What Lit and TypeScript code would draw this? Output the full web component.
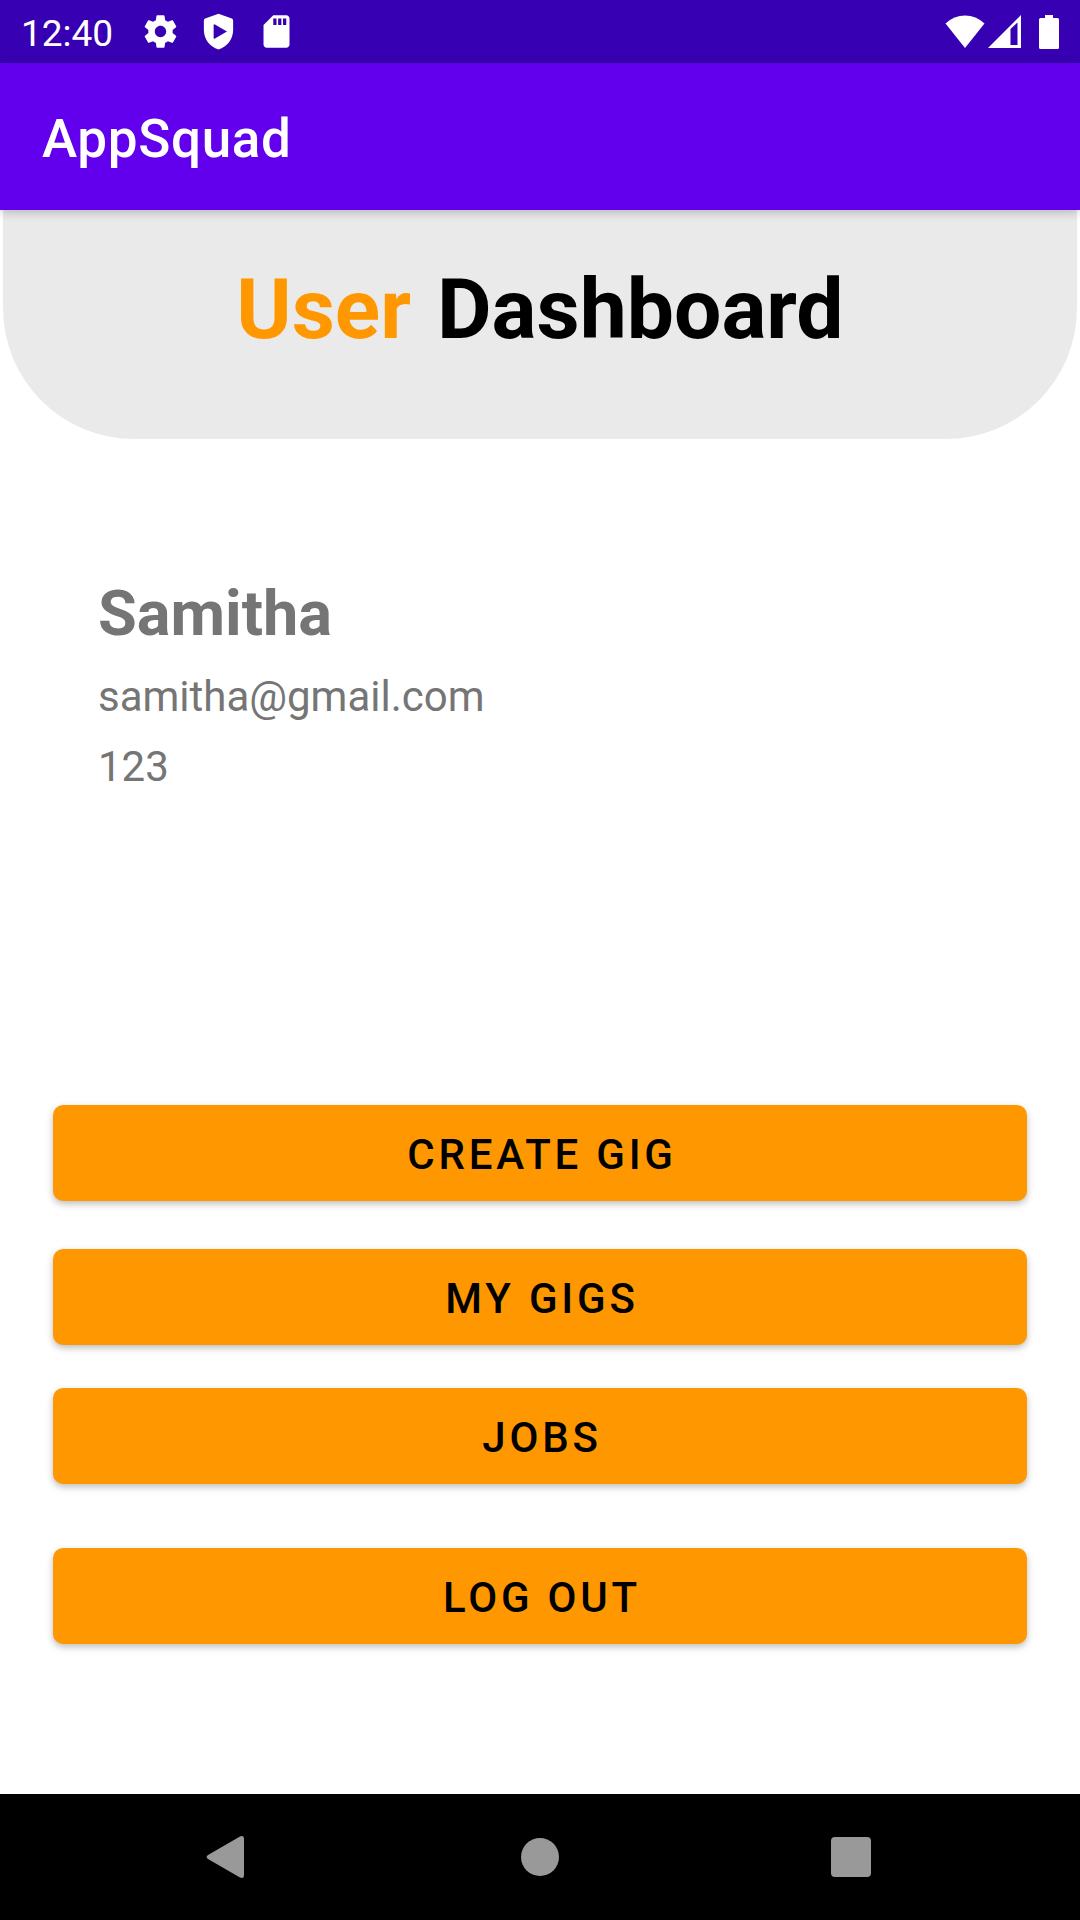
import { LitElement, html, css, svg } from "lit";
import { customElement, property } from "lit/decorators.js";

const fontStack = css`Roboto, "Noto Sans", sans-serif`;

@customElement("status-bar")
export class StatusBar extends LitElement {
  @property() time = "";

  static styles = css`
    :host {
      display: flex;
      align-items: center;
      justify-content: space-between;
      height: 63px;
      padding: 0 21px;
      background: #3700b3;
      color: #fff;
      font-family: ${fontStack};
      font-size: 37px;
      line-height: 44px;
    }
    .group {
      display: flex;
      align-items: center;
    }
    .time {
      padding-top: 4px;
    }
    .notices {
      display: flex;
      gap: 19px;
      margin-left: 28px;
    }
    .system {
      gap: 3px;
    }
    svg {
      display: block;
      fill: currentColor;
    }
    .battery {
      margin-left: 15px;
    }
  `;

  private notice(path: unknown) {
    return html`<svg width="39" height="39" viewBox="0 0 24 24" aria-hidden="true">${path}</svg>`;
  }

  render() {
    return html`
      <div class="group">
        <span class="time">${this.time}</span>
        <div class="notices">
          ${this.notice(svg`<path d="M19.43 12.98c.04-.32.07-.64.07-.98s-.03-.66-.07-.98l2.11-1.65c.19-.15.24-.42.12-.64l-2-3.46c-.12-.22-.39-.3-.61-.22l-2.49 1c-.52-.4-1.08-.73-1.69-.98l-.38-2.65C14.46 2.18 14.25 2 14 2h-4c-.25 0-.46.18-.49.42l-.38 2.65c-.61.25-1.17.59-1.69.98l-2.49-1c-.23-.09-.49 0-.61.22l-2 3.46c-.13.22-.07.49.12.64l2.11 1.65c-.04.32-.07.65-.07.98s.03.66.07.98l-2.11 1.65c-.19.15-.24.42-.12.64l2 3.46c.12.22.39.3.61.22l2.49-1c.52.4 1.08.73 1.69.98l.38 2.65c.03.24.24.42.49.42h4c.25 0 .46-.18.49-.42l.38-2.65c.61-.25 1.17-.59 1.69-.98l2.49 1c.23.09.49 0 .61-.22l2-3.46c.12-.22.07-.49-.12-.64l-2.11-1.65zM12 15.5c-1.93 0-3.5-1.57-3.5-3.5s1.57-3.5 3.5-3.5 3.5 1.57 3.5 3.5-1.57 3.5-3.5 3.5z"/>`)}
          ${this.notice(svg`<path fill-rule="evenodd" d="M12 1 3.800 4Q3 4.300 3 5.200V11c0 5.550 3.600 10.400 9 12 5.400-1.600 9-6.450 9-12V5.200Q21 4.300 20.200 4ZM9 8.200Q9 7.300 9.800 7.700L17.200 12 9.800 16.300Q9 16.700 9 15.800Z"/>`)}
          ${this.notice(svg`<path d="M18 2h-8L4.020 8 4 20c0 1.100.9 2 2 2h12c1.100 0 2-.9 2-2V4c0-1.100-.9-2-2-2zm-6 6h-2V4h2v4zm3 0h-2V4h2v4zm3 0h-2V4h2v4z"/>`)}
        </div>
      </div>
      <div class="group system">
        <svg width="40" height="34" viewBox="0 0 40 34" aria-hidden="true">
          <path d="M20 33 .5 8.500Q9 .5 20 .5T39.500 8.500Z" />
        </svg>
        <svg width="33" height="34" viewBox="0 0 33 34" aria-hidden="true">
          <path fill-rule="evenodd" d="M0 33 33 0V33ZM22.500 14V30H29.500V7.500Z" />
        </svg>
        <svg class="battery" width="20" height="34" viewBox="0 0 20 34" aria-hidden="true">
          <path d="M6 0H14V3H18.500Q20 3 20 4.500V32.500Q20 34 18.500 34H1.500Q0 34 0 32.500V4.500Q0 3 1.500 3H6Z" />
        </svg>
      </div>
    `;
  }
}

@customElement("navigation-bar")
export class NavigationBar extends LitElement {
  static styles = css`
    :host {
      display: grid;
      grid-template-columns: repeat(3, 1fr);
      height: 126px;
      padding: 0 73px;
      background: #000;
    }
    button {
      display: flex;
      align-items: center;
      justify-content: center;
      padding: 0;
      border: 0;
      background: none;
      color: #999;
      cursor: pointer;
    }
    svg {
      display: block;
      fill: currentColor;
    }
  `;

  render() {
    return html`
      <button type="button" aria-label="Back">
        <svg width="48" height="48" viewBox="0 0 48 48">
          <path d="M3 22 35 3.400Q39 1.800 39 6V42Q39 46.200 35 44.600L3 26Q.2 24 3 22Z" />
        </svg>
      </button>
      <button type="button" aria-label="Home">
        <svg width="48" height="48" viewBox="0 0 48 48"><circle cx="24" cy="24" r="19" /></svg>
      </button>
      <button type="button" aria-label="Overview">
        <svg width="48" height="48" viewBox="0 0 48 48">
          <rect x="4" y="4" width="40" height="40" rx="4" />
        </svg>
      </button>
    `;
  }
}

@customElement("app-root")
export class AppRoot extends LitElement {
  static styles = css`
    :host {
      display: flex;
      flex-direction: column;
      min-height: 100vh;
      background: #fff;
      color: #000;
      font-family: ${fontStack};
    }
    .app-bar {
      display: flex;
      align-items: center;
      box-sizing: border-box;
      height: 147px;
      padding: 4px 42px 0;
      background: #6200ee;
      color: #fff;
      font-size: 53px;
      font-weight: 500;
      line-height: 62px;
      letter-spacing: 0.0125em;
      box-shadow: 0 2px 10px rgba(0, 0, 0, 0.24);
      z-index: 1;
    }
    main {
      flex: 1;
      display: flex;
      flex-direction: column;
    }
    .hero {
      margin: 0 3px;
      padding: 51px 20px 80px;
      border-radius: 0 0 131px 131px;
      background: #eaeaea;
    }
    h1 {
      display: flex;
      justify-content: center;
      gap: 26px;
      margin: 0;
      font-size: 84px;
      font-weight: 700;
      line-height: 98px;
    }
    .accent {
      color: #ff9800;
    }
    .profile {
      display: flex;
      flex-direction: column;
      gap: 20px;
      padding: 137px 98px 60px;
      color: #757575;
      font-size: 42px;
      line-height: 50px;
    }
    h2,
    p {
      margin: 0;
    }
    h2 {
      font-size: 63px;
      font-weight: 700;
      line-height: 76px;
    }
    .actions {
      display: flex;
      flex-direction: column;
      margin-top: auto;
      padding: 0 53px 150px;
    }
    .action {
      height: 96px;
      margin: 0 0 43px;
      padding: 4px 42px 0 46px;
      border: 0;
      border-radius: 10px;
      background: #ff9800;
      color: #000;
      font-family: inherit;
      font-size: 42px;
      font-weight: 500;
      line-height: 50px;
      letter-spacing: 0.09em;
      text-transform: uppercase;
      box-shadow: 0 3px 7px rgba(0, 0, 0, 0.26);
      cursor: pointer;
    }
    .action:first-child {
      margin-bottom: 48px;
    }
    .action:last-child {
      margin: 21px 0 0;
    }
  `;

  private actions = ["Create Gig", "My Gigs", "Jobs", "Log out"];

  render() {
    return html`
      <status-bar time="12:40"></status-bar>
      <header class="app-bar">AppSquad</header>
      <main>
        <div class="hero">
          <h1><span class="accent">User</span> <span>Dashboard</span></h1>
        </div>
        <section class="profile">
          <h2>Samitha</h2>
          <p>samitha@gmail.com</p>
          <p>123</p>
        </section>
        <div class="actions">
          ${this.actions.map((label) => html`<button class="action" type="button">${label}</button>`)}
        </div>
      </main>
      <navigation-bar></navigation-bar>
    `;
  }
}
